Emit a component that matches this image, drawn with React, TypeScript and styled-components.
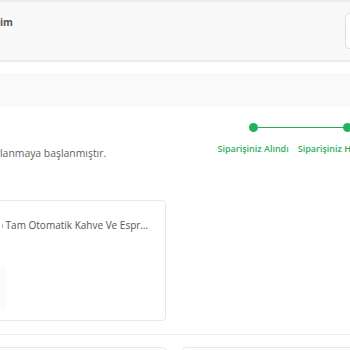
import React from 'react';
import styled, { createGlobalStyle } from 'styled-components';

const Global = createGlobalStyle`
  html, body { margin: 0; padding: 0; background: #fff; overflow: hidden; }
  body { font-family: "Open Sans", "Noto Sans", sans-serif; }
`;

const Page = styled.div`
  width: 350px;
  height: 350px;
  overflow: hidden;
  display: flex;
  flex-direction: column;
`;

/* Text that continues to the left, beyond the viewport edge */
const Clip = styled.span`
  display: inline-block;
  width: 0;
  direction: rtl;
  white-space: nowrap;
`;

const Header = styled.header`
  flex: none;
  height: 58px;
  background: #f9f9f9;
  border-top: 2px solid #ececec;
  border-bottom: 2px solid #ebebeb;
  display: flex;
  align-items: flex-start;
  justify-content: space-between;
`;

const Title = styled.h1`
  margin: 13px 0 0;
  font-size: 10px;
  line-height: 14px;
  font-weight: 700;
  color: #555;
  white-space: nowrap;
`;

const HeaderButton = styled.button`
  flex: none;
  width: 40px;
  height: 36px;
  margin: 11px -35px 0 0;
  background: #fff;
  border: 1px solid #dcdcdc;
  border-radius: 4px;
`;

const Band = styled.div`
  flex: none;
  height: 34px;
  margin-top: 11px;
  background: #fafafa;
`;

const StatusRow = styled.section`
  flex: none;
  display: flex;
  align-items: flex-start;
  margin-top: 16px;
`;

const StatusMessage = styled.p`
  flex: 0 0 213px;
  margin: 0;
  padding-top: 24px;
  font-size: 10.4px;
  line-height: 12px;
  color: #5f5f5f;
  white-space: nowrap;
`;

const Stepper = styled.ol`
  flex: none;
  display: flex;
  margin: 0;
  padding: 0;
  list-style: none;
`;

const Step = styled.li`
  display: flex;
  flex-direction: column;
`;

const Track = styled.div`
  display: flex;
  align-items: center;
  height: 9px;
`;

const Line = styled.span<{ $state: 'done' | 'todo' | 'none' }>`
  flex: 1;
  height: 1px;
  background: ${p => (p.$state === 'done' ? '#2aa85e' : p.$state === 'todo' ? '#d9d9d9' : 'transparent')};
`;

const Dot = styled.span<{ $done: boolean }>`
  flex: none;
  width: 9px;
  height: 9px;
  border-radius: 50%;
  background: ${p => (p.$done ? '#1fb35a' : '#d9d9d9')};
`;

const StepLabel = styled.span<{ $done: boolean }>`
  margin-top: 11px;
  padding: 0 4.5px;
  font-size: 9px;
  line-height: 11px;
  font-weight: 600;
  color: ${p => (p.$done ? '#2db163' : '#9b9b9b')};
  white-space: nowrap;
`;

const Card = styled.article`
  flex: none;
  box-sizing: border-box;
  width: 186px;
  height: 121px;
  margin: 41px 0 0 -20px;
  padding: 0 12px 0 21px;
  border: 1px solid #e9e9e9;
  border-radius: 4px;
  background: #fff;
  display: flex;
  flex-direction: column;
`;

const ProductName = styled.div`
  margin-top: 16px;
  padding-left: 1px;
  font-size: 10px;
  line-height: 16px;
  color: #555;
  white-space: nowrap;
  overflow: hidden;
  text-overflow: ellipsis;
`;

const Thumb = styled.div`
  width: 55px;
  height: 46px;
  margin: 32px 0 0 -51px;
  border-radius: 3px;
  background: #fafbfc;
`;

const Divider = styled.hr`
  flex: none;
  width: 100%;
  height: 0;
  margin: 13px 0 0;
  border: 0;
  border-top: 1px solid #ebebeb;
`;

const CardRow = styled.div`
  flex: none;
  display: flex;
  gap: 16px;
  margin: 12px 0 0 -20px;
`;

const StubCard = styled.div`
  flex: none;
  box-sizing: border-box;
  width: 186px;
  height: 40px;
  border: 1px solid #e9e9e9;
  border-radius: 4px;
`;

const steps = [
  { label: 'Siparişiniz Alındı', done: true },
  { label: 'Siparişiniz Hazırlanıyor', done: true },
  { label: 'Kargoya Verildi', done: false },
  { label: 'Teslim Edildi', done: false },
];

export default function App() {
  return (
    <>
      <Global />
      <Page>
        <Header>
          <Title>
            <Clip>Siparişler</Clip>im
          </Title>
          <HeaderButton aria-label="Fatura" />
        </Header>
        <Band />
        <StatusRow>
          <StatusMessage>
            <Clip>Siparişiniz hazır</Clip>lanmaya başlanmıştır.
          </StatusMessage>
          <Stepper>
            {steps.map((s, i) => {
              const prev = steps[i - 1];
              const next = steps[i + 1];
              return (
                <Step key={s.label}>
                  <Track>
                    <Line $state={!prev ? 'none' : s.done ? 'done' : 'todo'} />
                    <Dot $done={s.done} />
                    <Line $state={!next ? 'none' : next.done ? 'done' : 'todo'} />
                  </Track>
                  <StepLabel $done={s.done}>{s.label}</StepLabel>
                </Step>
              );
            })}
          </Stepper>
        </StatusRow>
        <Card>
          <ProductName>
            <Clip>Philips Seri 2200 LatteGo</Clip> Tam Otomatik Kahve Ve Espresso Makinesi
          </ProductName>
          <Thumb />
        </Card>
        <Divider />
        <CardRow>
          <StubCard />
          <StubCard />
        </CardRow>
      </Page>
    </>
  );
}
